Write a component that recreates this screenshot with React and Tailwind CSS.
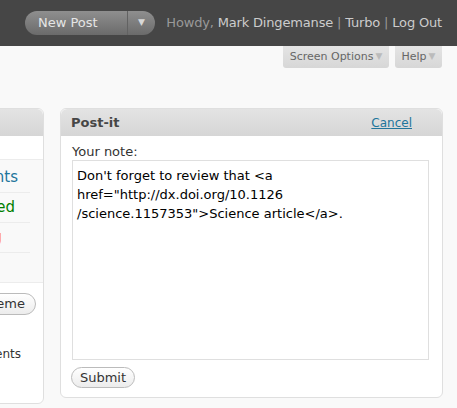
export default function App() {
  return (
    <div className="min-h-[408px] bg-[#f9f9f9] font-['DejaVu_Sans',sans-serif] text-[#333] overflow-hidden">
      {/* admin header */}
      <div className="h-[46px] bg-[#464646] flex items-center pl-[25px] pr-[15px]">
        <div className="flex h-[24px] w-[130px] rounded-full bg-gradient-to-b from-[#8f8f8f] to-[#6b6b6b] text-[13px] text-[#e5e5e5] overflow-hidden">
          <span className="flex-1 flex items-center pl-[13px]">New Post</span>
          <span className="w-[28px] border-l border-[#626262] flex items-center justify-center text-[9px] text-[#d8d8d8]">▼</span>
        </div>
        <div className="ml-auto text-[13px] tracking-[-0.17px] text-[#999] whitespace-nowrap">
          Howdy, <span className="text-[#ccc]">Mark Dingemanse</span> | <span className="text-[#ccc]">Turbo</span> | <span className="text-[#ccc]">Log Out</span>
        </div>
      </div>

      {/* screen meta tabs */}
      <div className="flex justify-end gap-[6px] pr-[15px]">
        <div className="h-[22px] w-[106px] rounded-b-[3px] bg-gradient-to-b from-[#e4e4e4] to-[#d7d7d7] text-[11px] text-[#666] flex items-center justify-center gap-[2px]">
          Screen Options <span className="text-[9px] text-[#bbb]">▼</span>
        </div>
        <div className="h-[22px] w-[47px] rounded-b-[3px] bg-gradient-to-b from-[#e4e4e4] to-[#d7d7d7] text-[11px] text-[#666] flex items-center justify-center gap-[2px]">
          Help <span className="text-[9px] text-[#bbb]">▼</span>
        </div>
      </div>

      <div className="flex items-start mt-[40px]">
        {/* clipped left widget */}
        <div className="w-[44px] overflow-hidden flex justify-end shrink-0">
          <div className="w-[220px] shrink-0 h-[296px] bg-white border border-[#dfdfdf] rounded-[6px] flex flex-col">
            <div className="h-[27px] rounded-t-[6px] bg-gradient-to-b from-[#e3e3e3] to-[#d6d6d6]" />
            <div className="h-[23px]" />
            <div className="h-[124px] bg-[#f9f9f9] border-y border-[#ececec] pr-[13px] pt-[3px]">
              <div className="h-[30px] border-b border-[#ececec] flex items-center justify-end pr-[12px] text-[15px] text-[#21759b]">Comments</div>
              <div className="h-[30px] border-b border-[#ececec] flex items-center justify-end pr-[15px] text-[15px] text-[#008000]">Approved</div>
              <div className="h-[30px] border-b border-[#ececec] flex items-center justify-end pr-[28px] text-[15px] text-[#ff8c1a]">Pending</div>
            </div>
            <div className="flex justify-end pr-[7px] mt-[10px]">
              <div className="h-[22px] px-[10px] rounded-full border border-[#bbb] bg-gradient-to-b from-white to-[#ececec] text-[13px] flex items-center">Change Theme</div>
            </div>
            <div className="text-right pr-[22px] mt-[30px] text-[12px] text-[#333]">comments</div>
          </div>
        </div>

        {/* Post-it widget */}
        <div className="ml-[16px] w-[383px] h-[290px] bg-white border border-[#dfdfdf] rounded-[6px] flex flex-col">
          <div className="h-[27px] rounded-t-[6px] bg-gradient-to-b from-[#e3e3e3] to-[#d6d6d6] flex items-center justify-between pl-[10px] pr-[30px]">
            <span className="text-[13px] font-bold text-[#464646]">Post-it</span>
            <span className="text-[12px] text-[#21759b] underline">Cancel</span>
          </div>
          <div className="px-[11px] pt-[8px]">
            <div className="text-[13px] leading-[16px] text-[#333]">Your note:</div>
            <div className="w-[357px] h-[200px] border border-[#dfdfdf] px-[4px] pt-[5px] text-[13px] leading-[19px] text-black">
              Don't forget to review that &lt;a<br />
              href="http://dx.doi.org/10.1126<br />
              /science.1157353"&gt;Science article&lt;/a&gt;.
            </div>
            <div className="mt-[7px] -ml-[1px] h-[21px] w-[64px] rounded-full border border-[#bbb] bg-gradient-to-b from-white to-[#ececec] text-[13px] text-[#333] flex items-center justify-center">
              Submit
            </div>
          </div>
        </div>
      </div>
    </div>
  );
}
